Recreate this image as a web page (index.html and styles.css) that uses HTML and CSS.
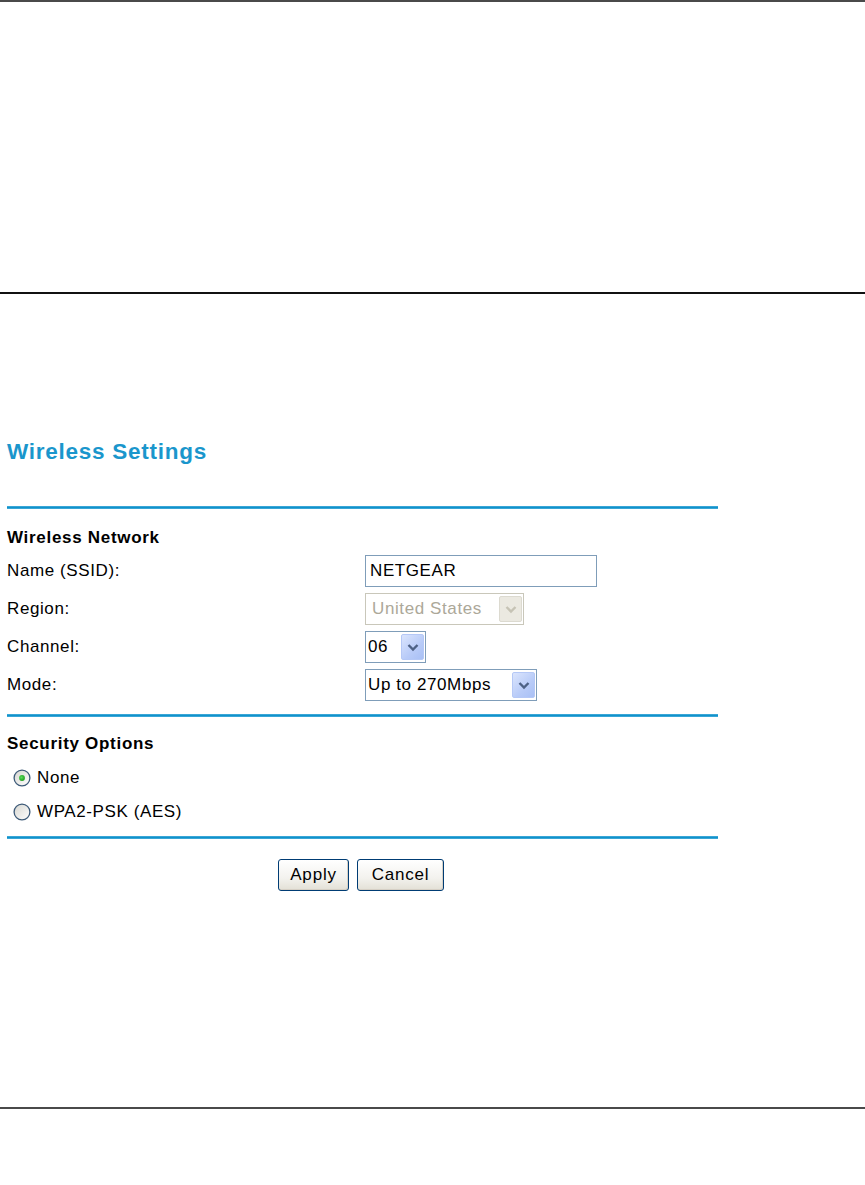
FILE: index.html
```html
<!DOCTYPE html>
<html lang="en">
<head>
<meta charset="utf-8">
<title>Wireless Settings</title>
<link rel="stylesheet" href="styles.css">
</head>
<body>
<div class="rule-top"></div>
<div class="header-space"></div>
<div class="rule-mid"></div>

<main class="content">
  <h1 class="title">Wireless Settings</h1>
  <div class="blue-rule first"></div>

  <h2 class="section-head net-head">Wireless Network</h2>
  <div class="form-grid">
    <div class="label">Name (SSID):</div>
    <div class="field"><div class="textbox">NETGEAR</div></div>

    <div class="label">Region:</div>
    <div class="field">
      <div class="select disabled region">
        <span class="select-text">United States</span>
        <span class="select-btn">
          <svg width="12" height="9" viewBox="0 0 12 9"><path d="M1.5 2 L6 6.5 L10.5 2" fill="none" stroke="#c6c3b5" stroke-width="2.4"/></svg>
        </span>
      </div>
    </div>

    <div class="label">Channel:</div>
    <div class="field">
      <div class="select channel">
        <span class="select-text">06</span>
        <span class="select-btn">
          <svg width="12" height="9" viewBox="0 0 12 9"><path d="M1.5 2 L6 6.5 L10.5 2" fill="none" stroke="#4d6185" stroke-width="2.4"/></svg>
        </span>
      </div>
    </div>

    <div class="label">Mode:</div>
    <div class="field">
      <div class="select mode">
        <span class="select-text">Up to 270Mbps</span>
        <span class="select-btn">
          <svg width="12" height="9" viewBox="0 0 12 9"><path d="M1.5 2 L6 6.5 L10.5 2" fill="none" stroke="#4d6185" stroke-width="2.4"/></svg>
        </span>
      </div>
    </div>
  </div>

  <div class="blue-rule second"></div>

  <h2 class="section-head sec-head">Security Options</h2>
  <div class="radio-row">
    <svg class="radio" width="18" height="18" viewBox="0 0 18 18">
      <defs>
        <linearGradient id="rf1" x1="0" y1="0" x2="1" y2="1">
          <stop offset="0" stop-color="#d6d6d0"/>
          <stop offset="1" stop-color="#ffffff"/>
        </linearGradient>
        <radialGradient id="dot" cx="0.4" cy="0.4" r="0.7">
          <stop offset="0" stop-color="#5cdc5c"/>
          <stop offset="1" stop-color="#189818"/>
        </radialGradient>
      </defs>
      <circle cx="9" cy="9" r="7.9" fill="url(#rf1)" stroke="#3d5a78" stroke-width="1.3"/>
      <circle cx="9" cy="9" r="2.9" fill="url(#dot)"/>
    </svg>
    <span class="radio-label">None</span>
  </div>
  <div class="radio-row">
    <svg class="radio" width="18" height="18" viewBox="0 0 18 18">
      <defs>
        <linearGradient id="rf2" x1="0" y1="0" x2="1" y2="1">
          <stop offset="0" stop-color="#d6d6d0"/>
          <stop offset="1" stop-color="#ffffff"/>
        </linearGradient>
      </defs>
      <circle cx="9" cy="9" r="7.9" fill="url(#rf2)" stroke="#3d5a78" stroke-width="1.3"/>
    </svg>
    <span class="radio-label">WPA2-PSK (AES)</span>
  </div>

  <div class="blue-rule third"></div>

  <div class="buttons">
    <button class="btn apply" type="button">Apply</button>
    <button class="btn cancel" type="button">Cancel</button>
  </div>
</main>

<div class="rule-bottom"></div>
</body>
</html>
```

FILE: styles.css
```css
* { box-sizing: border-box; }

html, body {
  margin: 0;
  padding: 0;
  background: #ffffff;
}

body {
  font-family: "Liberation Sans", Arial, sans-serif;
  font-size: 17px;
  letter-spacing: 0.6px;
  color: #000;
  width: 865px;
}

.rule-top {
  height: 2px;
  background: #4a4a4a;
}

.header-space {
  height: 290px;
}

.rule-mid {
  height: 2px;
  background: #111;
}

.content {
  padding-left: 7px;
  width: 718px;
}

.title {
  margin: 145px 0 0 0;
  font-size: 22.5px;
  line-height: 26px;
  font-weight: bold;
  letter-spacing: 0.75px;
  color: #1a96cc;
}

.blue-rule {
  height: 3px;
  background: linear-gradient(#5cb8e0, #1192cb 35%, #1192cb 65%, #5cb8e0);
}

.blue-rule.first { margin-top: 41px; }
.blue-rule.second { margin-top: 10px; }
.blue-rule.third { margin-top: 7px; }

.section-head {
  margin: 0;
  font-size: 17px;
  line-height: 29px;
  font-weight: bold;
  letter-spacing: 0.7px;
}

.net-head { margin-top: 14px; }
.sec-head { margin-top: 12px; height: 30px; }

.form-grid {
  display: grid;
  grid-template-columns: 358px 1fr;
  grid-auto-rows: 38px;
  align-items: center;
}

.label {
  line-height: 20px;
}

.field {
  display: flex;
  align-items: center;
}

.textbox {
  width: 232px;
  height: 32px;
  border: 1px solid #7f9db9;
  padding: 0 4px;
  line-height: 30px;
  background: #fff;
  white-space: nowrap;
}

.select {
  height: 32px;
  border: 1px solid #7f9db9;
  display: flex;
  align-items: center;
  justify-content: space-between;
  padding: 2px 1px 2px 2px;
  background: #fff;
}

.select-text {
  line-height: 20px;
  white-space: nowrap;
}

.select-btn {
  width: 23px;
  height: 100%;
  border: 1px solid #b5c8f6;
  border-radius: 2px;
  background: linear-gradient(135deg, #dbe5fd, #b8cbf8 60%, #a9c0f5);
  display: flex;
  align-items: center;
  justify-content: center;
}

.select.region { width: 159px; padding-left: 6px; }
.select.channel { width: 61px; }
.select.mode { width: 172px; }

.select.disabled {
  border-color: #c9c7ba;
  color: #aca899;
}

.select.disabled .select-btn {
  border-color: #dcdad0;
  background: #ebe9e1;
}

.radio-row {
  height: 34px;
  display: flex;
  align-items: center;
}

.sec-head + .radio-row { margin-top: 2px; }

.radio {
  margin-left: 6px;
  margin-right: 6px;
  flex: none;
}

.radio-label {
  line-height: 20px;
}

.buttons {
  margin-top: 20px;
  padding-left: 271px;
  display: flex;
  gap: 8px;
}

.btn {
  height: 32px;
  border: 1px solid #003c74;
  border-radius: 3px;
  background: linear-gradient(#ffffff, #f3f2ee 60%, #e3e0d6);
  font-family: "Liberation Sans", Arial, sans-serif;
  font-size: 17px;
  letter-spacing: 0.8px;
  color: #000;
  padding: 0;
  box-shadow: inset -1px -1px 0 #d6d0c5;
}

.btn.apply { width: 71px; }
.btn.cancel { width: 87px; }

.rule-bottom {
  margin-top: 216px;
  height: 2px;
  background: #4a4a4a;
}
```
